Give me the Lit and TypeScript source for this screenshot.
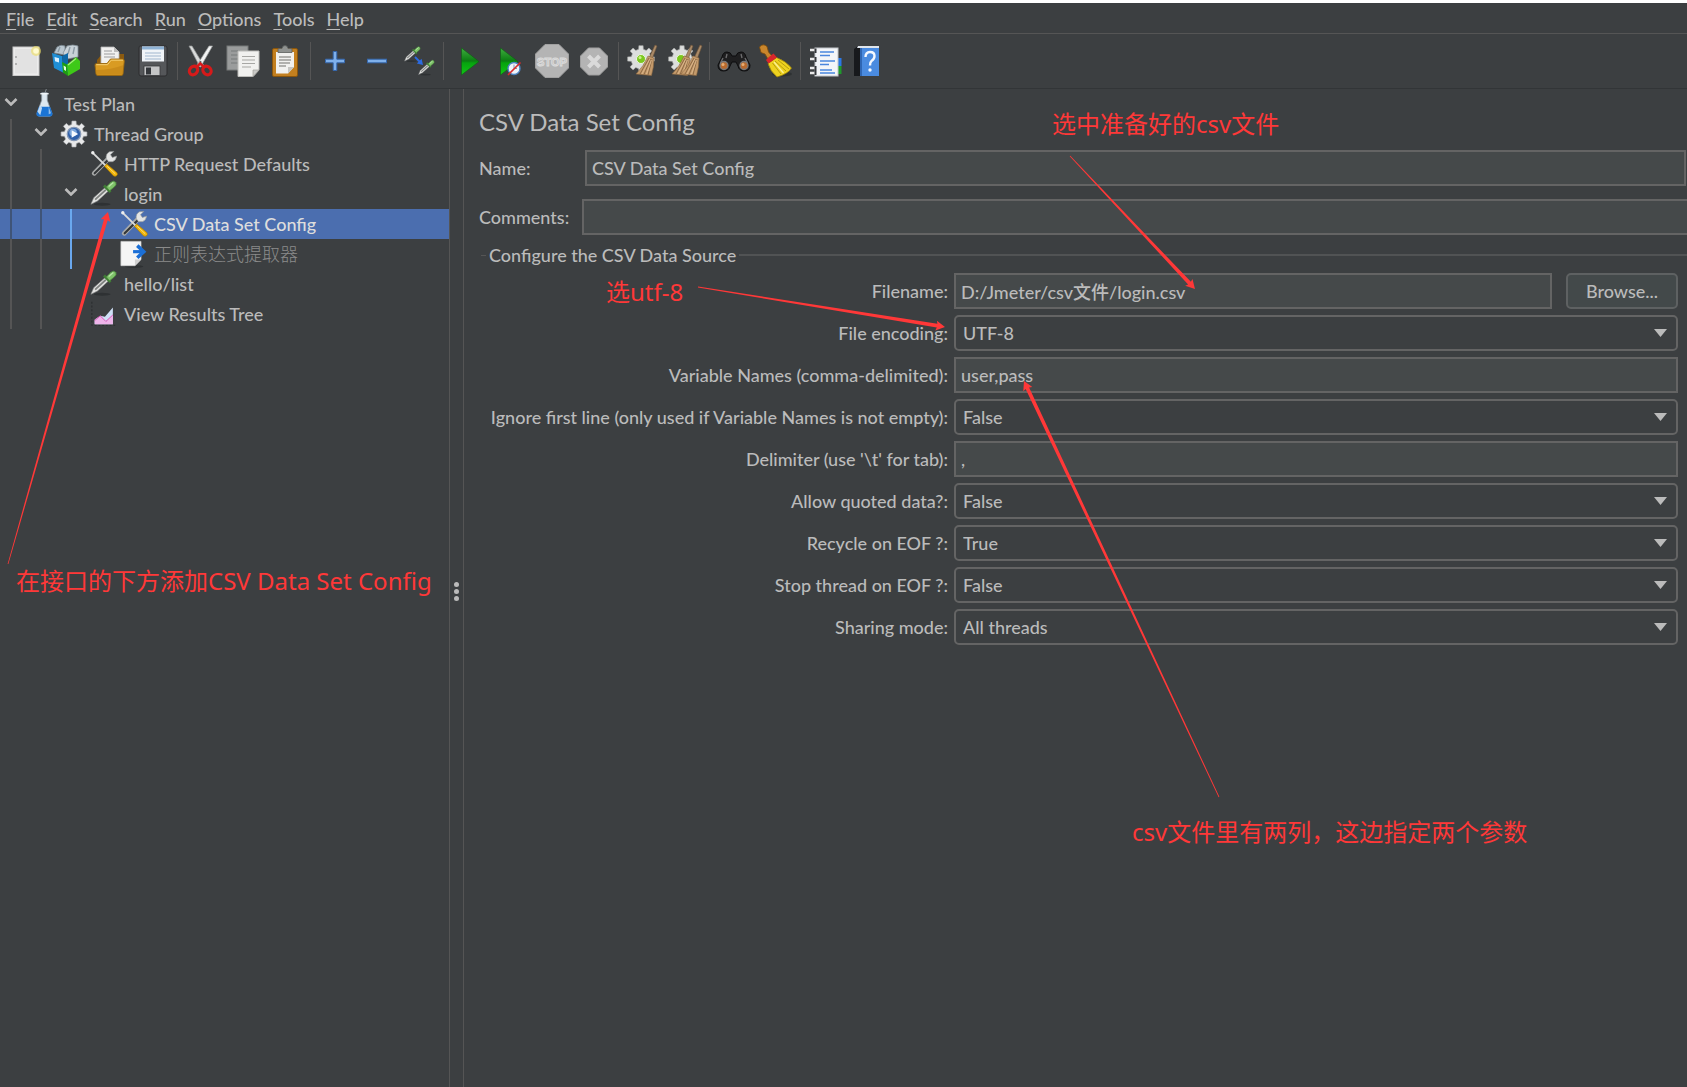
import { LitElement, html, svg, css, nothing, TemplateResult } from "lit";
import { customElement, property, state } from "lit/decorators.js";
import { classMap } from "lit/directives/class-map.js";

const gearPath = (cx: number, cy: number, ro: number, ri: number, n = 8) => {
  const pts: string[] = [];
  const step = (Math.PI * 2) / n;
  for (let i = 0; i < n; i++) {
    const a = i * step;
    for (const [d, r] of [[-0.3, ri], [-0.2, ro], [0.2, ro], [0.3, ri]]) {
      pts.push(`${(cx + Math.cos(a + d * step) * r).toFixed(2)} ${(cy + Math.sin(a + d * step) * r).toFixed(2)}`);
    }
  }
  return `M${pts.join("L")}Z`;
};

const dropper = (x: number, y: number, s: number) => svg`
  <g transform="translate(${x} ${y}) scale(${s})">
    <ellipse cx="13" cy="26" rx="9" ry="1.6" fill="#25282a" opacity=".6"/>
    <path d="M1 26 L4 19 L17 7.5 L20.5 11 L8 22.5Z" fill="#e4e4e2" stroke="#8d8f8f" stroke-width=".7"/>
    <path d="M5.5 21 L17 10.5" stroke="#7f8280" stroke-width="2"/>
    <path d="M15 6 L22 13" stroke="#3f7d35" stroke-width="3"/>
    <path d="M17.5 7.5 L22.5 2.5 Q25.5 0 27.5 2.5 Q29 5 26 7.5 L21 11.5Z" fill="#7fc36a" stroke="#4c8f3e" stroke-width=".9"/>
    <path d="M20 7 L25 2.8" stroke="#b9e6aa" stroke-width="1.4"/>
  </g>`;

const bristles = (dx: number) => svg`
  <g transform="translate(${dx} 0)">
    <path d="M28 0 L30 1 L25.5 13 L22.5 12Z" fill="#a98a68" stroke="#6d5338" stroke-width=".6"/>
    <path d="M21 11 L27 13 Q27 22 24.500 30.500 L9 29 Q17 21 21 11Z" fill="#c49a6b" stroke="#8a6640" stroke-width=".6"/>
    <path d="M22 13 L13 29 M23.500 14 L17 29.500 M25 14 L21 30" stroke="#8d6a45" stroke-width="1"/>
    <path d="M22.800 14 L15 29 M24.500 15 L19.500 29" stroke="#e0bd92" stroke-width=".8"/>
  </g>`;

const icons: Record<string, TemplateResult> = {
  new: svg`
    <rect x="2" y="2" width="26" height="28.500" fill="#ececec" stroke="#c9c9c9"/>
    <rect x="4" y="4" width="22" height="24.500" fill="#e2e2e2"/>
    <circle cx="5" cy="12" r=".9" fill="#999"/><circle cx="5" cy="19" r=".9" fill="#999"/>
    <circle cx="25" cy="6" r="5" fill="#efe06a" opacity=".65"/><circle cx="25" cy="6" r="2.800" fill="#fffbd0"/>`,
  templates: svg`
    <path d="M1 8 L4 2 Q8 -1 12 1 L12 10Z" fill="#b9c6cf" stroke="#75838c" stroke-width=".8"/>
    <path d="M10 8 L14 1 Q20 -1 25 1 L25 12 L14 14Z" fill="#c9d2d8" stroke="#7d8b94" stroke-width=".8"/>
    <path d="M15 9 L17 2 M20 9 L21.500 2 M5 7 L7 2" stroke="#8c9ba5" stroke-width="1.400"/>
    <path d="M-1 8 L9 11 L11 28 L1 23Z" fill="#1f8fd6"/>
    <path d="M9 11 L15 8 L15 27 L11 28Z" fill="#0d68a8"/>
    <path d="M1.500 12 L6 13.200 V17.500 L2 16.200Z" fill="#d8f0ff"/>
    <path d="M9 17 L14 19.500 L15 31 L10 27.500Z" fill="#1d9e10"/>
    <path d="M14 19.500 L23 12 L27 16 V24 L15 31Z" fill="#3ec918"/>
    <path d="M15 20 L23 13.500" stroke="#a5f07d" stroke-width="1.200"/>
    <path d="M10.500 20.500 L13 22 V26 L11 24.800Z" fill="#e2ffd9"/>`,
  open: svg`
    <path d="M2 15 L7 9 H29 V18 H2Z" fill="#8a5a10"/>
    <path d="M6 2 H19 L24 7 V19 H6Z" fill="#f1f1f0" stroke="#b5b5b5" stroke-width=".8"/>
    <path d="M19 2 V7 H24Z" fill="#bdbdbd"/>
    <path d="M9 6 H17 M9 9 H20 M9 12 H20" stroke="#9c9c9c" stroke-width="1.200"/>
    <path d="M0 20 Q0 18.500 1.500 18.500 H12 L15.500 14 H27 Q29.500 14 29.300 16 L28 29 Q27.800 30.500 26 30.500 H3 Q1.200 30.500 1 29Z" fill="#d99b22" stroke="#9a6810" stroke-width=".9"/>
    <path d="M1.300 19.700 H12.600 L16.200 15.200 H28" stroke="#f4cf74" fill="none"/>
    <path d="M1 25 Q16 25 28.500 20 L27.500 29.800 H1.800Z" fill="#b87a12" opacity=".45"/>`,
  save: svg`
    <path d="M3 1 H28.500 Q30 1 30 3 V29 Q30 31 28 31 H4 Q2 31 2 29 V3 Q2 1 3 1Z" fill="#55575a" stroke="#2c2d2f"/>
    <rect x="5" y="1.500" width="22" height="15" fill="#f0f4f8"/><rect x="5" y="1.500" width="22" height="3" fill="#8fb3d6"/>
    <path d="M8 8 H24 M8 11 H24 M8 14 H24" stroke="#9fb6cd" stroke-width="1.100"/>
    <rect x="7" y="21" width="16" height="9.500" fill="#c4c5c6" stroke="#37393b" stroke-width=".8"/>
    <rect x="9" y="22.500" width="5" height="7" fill="#33363a"/>`,
  cut: svg`
    <path d="M3 1 L6 1 L17.500 20 L14 22Z" fill="#d9dbdb" stroke="#8f9292" stroke-width=".7"/>
    <path d="M26.500 1 L23 1 L11 20 L14.500 22Z" fill="#f2f3f3" stroke="#9b9e9e" stroke-width=".7"/>
    <circle cx="14.500" cy="17" r="1.100" fill="#555"/>
    <ellipse cx="7.500" cy="25.500" rx="3.800" ry="4.600" fill="none" stroke="#d61a1a" stroke-width="3.200" transform="rotate(40 7.500 25.500)"/>
    <ellipse cx="21" cy="25.500" rx="3.800" ry="4.600" fill="none" stroke="#d61a1a" stroke-width="3.200" transform="rotate(-40 21 25.500)"/>
    <path d="M10.500 22 L14.200 18.500 L18 22" fill="none" stroke="#d61a1a" stroke-width="2.600"/>`,
  copy: svg`
    <rect x="-1" y="1" width="21" height="24" fill="#9a9c9c" stroke="#777a7a"/>
    <path d="M3 6 H12 M3 10 H10 M3 14 H10 M3 18 H10" stroke="#777a7a" stroke-width="1.200"/>
    <path d="M10 6 H31 V25 L25 31.500 H10Z" fill="#f1f1ef" stroke="#bcbcb9"/>
    <path d="M31 25 H25 V31.500Z" fill="#c9c9c6" stroke="#9d9d9a" stroke-width=".7"/>
    <path d="M14 11.500 H27 M14 15 H27 M14 18.500 H27 M14 22 H23" stroke="#a7a7a4" stroke-width="1.200"/>`,
  paste: svg`
    <rect x="2.500" y="3.500" width="25" height="28" rx="1.500" fill="#c27f1f" stroke="#8a560d"/>
    <path d="M6 7 H24 V22 L18 28.500 H6Z" fill="#f1f1ef"/>
    <path d="M24 22 H18 V28.500Z" fill="#c5c5c2"/>
    <path d="M9 12 H21 M9 15 H21 M9 18 H20 M9 21 H16" stroke="#9c9c99" stroke-width="1.300"/>
    <path d="M8 7.500 V4.500 Q8 3.500 10 3.500 H12 Q12.500 .5 15 .5 Q17.500 .5 18 3.500 H20 Q22 3.500 22 4.500 V7.500Z" fill="#8f9290" stroke="#5b5e5c" stroke-width=".8"/>`,
  plus: svg`<path d="M14.200 6.500 H17.800 V14.200 H25.500 V17.800 H17.800 V25.500 H14.200 V17.800 H6.500 V14.200 H14.200Z" fill="#7fb0ea" stroke="#3567ad"/>`,
  minus: svg`<rect x="6.500" y="14.200" width="19" height="3.600" fill="#7fb0ea" stroke="#3567ad"/>`,
  toggle: svg`
    ${dropper(1, 1, 0.58)}${dropper(15, 14.5, 0.58)}
    <path d="M12 12 L17 17" stroke="#2c6be0" stroke-width="1.800"/><path d="M20 20 L13.800 18.600 L18.600 13.800Z" fill="#2c6be0"/>`,
  play: svg`
    <defs><linearGradient id="gp" x1="0" y1="0" x2="0" y2="1"><stop offset="0" stop-color="#3fae3f"/><stop offset=".48" stop-color="#0b7d12"/><stop offset=".55" stop-color="#06a30e"/><stop offset="1" stop-color="#12c416"/></linearGradient></defs>
    <path d="M9.500 3 L27 16.500 L9.500 30Z" fill="url(#gp)" stroke="#0e5e12" stroke-width=".6"/>`,
  playNow: svg`
    <defs><linearGradient id="gq" x1="0" y1="0" x2="0" y2="1"><stop offset="0" stop-color="#3fae3f"/><stop offset=".48" stop-color="#0b7d12"/><stop offset=".55" stop-color="#06a30e"/><stop offset="1" stop-color="#12c416"/></linearGradient></defs>
    <path d="M6.500 3 L24 16.500 L6.500 30Z" fill="url(#gq)" stroke="#0e5e12" stroke-width=".6"/>
    <circle cx="20" cy="23.500" r="6" fill="#eef3fa" stroke="#4d83c2" stroke-width="1.400"/>
    <path d="M20 19.500 V23.500 H23" stroke="#7b98ba" fill="none"/>
    <path d="M14 30 L26.500 17.500" stroke="#d92b2b" stroke-width="1.600"/>`,
  stop: svg`
    <path d="M9 -.5 H23 L32.500 9 V23 L23 32.500 H9 L-.5 23 V9Z" fill="#b4b4b4" stroke="#a0a0a0"/>
    <text x="16" y="20.500" text-anchor="middle" class="stop-word">STOP</text>`,
  shutdown: svg`
    <path d="M10.500 3 H21.500 L29.500 11 V22 L21.500 30 H10.500 L2.500 22 V11Z" fill="#b4b4b4" stroke="#a0a0a0"/>
    <path d="M10.500 11 L21.500 22 M21.500 11 L10.500 22" stroke="#dadada" stroke-width="4"/>`,
  clear: svg`
    <path d="${gearPath(14, 14, 13.5, 10)}" fill="#dcdedd" stroke="#a9abaa" stroke-width=".6"/>
    <circle cx="14" cy="14" r="4.500" fill="#7cc81e" stroke="#eef5e4"/><circle cx="13" cy="12.500" r="1.500" fill="#c9f08d"/>
    ${bristles(0)}`,
  clearAll: svg`
    <path d="${gearPath(13, 14, 13.5, 10)}" fill="#dcdedd" stroke="#a9abaa" stroke-width=".6"/>
    <circle cx="12" cy="14" r="4.500" fill="#7cc81e" stroke="#eef5e4"/>
    ${bristles(-6)}${bristles(3)}`,
  find: svg`
    <path d="M4 12 Q5 7 9 7 Q13 7 14 11 H18 Q19 7 23 7 Q27 7 28 12 L32 20 Q32 26 26.500 26 Q21 26 20 21 L18 17 H14 L12 21 Q11 26 5.500 26 Q0 26 0 20Z" fill="#1f1f20" stroke="#0d0d0e"/>
    <path d="M5 13 L2.500 18 M27 13 L29.500 18 M9 9 L8 13 M23 9 L24 13" stroke="#6c6c6e" stroke-width="1.400"/>
    <circle cx="6" cy="20.500" r="4" fill="#b86a2e" stroke="#77797b" stroke-width="1.300"/><circle cx="26" cy="20.500" r="4" fill="#b86a2e" stroke="#77797b" stroke-width="1.300"/>
    <circle cx="5" cy="19.500" r="1.500" fill="#e6ab72"/><circle cx="25" cy="19.500" r="1.500" fill="#e6ab72"/>`,
  resetFind: svg`
    <ellipse cx="22" cy="29" rx="10" ry="2.500" fill="#25282a" opacity=".6"/>
    <path d="M-.5 2 Q3 -2 7 1.500 L8.500 7 L12 11 L8 14 L5 9 L1 7.500Z" fill="#c9862c" stroke="#7c4d0d" stroke-width=".8"/>
    <path d="M16.500 12.500 Q26 16 31.500 23 Q28 29 17 32 Q10 26 8 18.500Z" fill="#eed21f" stroke="#9b8209" stroke-width=".8"/>
    <path d="M15 16 L26 26 M12.500 18 L21 29 M18 15 L29 24" stroke="#b89c0c" stroke-width="1"/>
    <path d="M14 17 L23.500 28" stroke="#fbf09a" stroke-width="1.200"/>
    <path d="M13.500 8.500 L17 12.500 L8.500 18.500 L6 15 Q9 11.500 13.500 8.500Z" fill="#d8262b"/>`,
  functions: svg`
    <rect x="25" y="13" width="7.500" height="8" fill="#2a78e4"/><rect x="25" y="21" width="7.500" height="8" fill="#1f9a2c"/>
    <rect x="6" y="3" width="23" height="28" fill="#f3f5f8" stroke="#c2c5c9"/>
    <path d="M11 7 H25 M11 10.500 H21 M11 16 H26 M11 19.500 H20 M11 25 H23 M11 28 H26" stroke="#4a86dd" stroke-width="1.700"/>
    <path d="M1 5 H7 M1 14 H7 M1 23 H7 M1 28 H7" stroke="#e9e9e9" stroke-width="2.600"/>
    <path d="M6.500 3.500 V8 M6.500 12 V17 M6.500 21 V30" stroke="#34373a" stroke-width="2"/>`,
  help: svg`
    <path d="M3 4 L7 1 H28 V29 L25 31 H3Z" fill="#17191c"/>
    <path d="M7 1 H28 V3 H6Z" fill="#dfe5ec"/>
    <rect x="9" y="3" width="19" height="28" fill="#4a8be0"/><rect x="9" y="3" width="2" height="28" fill="#2f66b3"/>
    <path d="M14.500 12 Q14.500 7 19 7 Q23.500 7 23.500 11 Q23.500 14 20.500 16 Q19 17.200 19 20.500" fill="none" stroke="#f4f8ff" stroke-width="2.400"/>
    <circle cx="19" cy="25" r="1.700" fill="#f4f8ff"/>`,
  flask: svg`
    <path d="M16 3 L17.500 -1" stroke="#8b9298" stroke-width="1"/>
    <path d="M12.500 3 H18.500 V11 L23.500 25 Q24 28 21 28 H10 Q7 28 7.500 25 L12.500 11Z" fill="#dde8f0" stroke="#8b9aa5" stroke-width=".8"/>
    <path d="M9.500 18 H21.500 L24 25 Q24.500 28.500 21 28.500 H10 Q6.500 28.500 7 25Z" fill="#1b74d4"/>
    <path d="M8 23 L10.500 17 L13 19 L11 27Z" fill="#e6f1fa" opacity=".8"/><path d="M20 18 L22.500 25 L20 26Z" fill="#e6f1fa" opacity=".6"/>
    <path d="M11 4 H20" stroke="#f4f8fa" stroke-width="1.400"/>`,
  gear: svg`
    <path d="${gearPath(15, 15, 14, 10.5)}" fill="#e8e9ea" stroke="#b4b6b8" stroke-width=".7"/>
    <circle cx="15" cy="15" r="7.200" fill="#2f5fa8" stroke="#8397b5" stroke-width="1.400"/>
    <circle cx="14" cy="13.500" r="4" fill="#7ba5da"/><path d="M12.500 11 L19.500 15 L12.500 19Z" fill="#f7faff"/>`,
  tools: svg`
    <path d="M4.500 25 L20 9" stroke="#a9abab" stroke-width="5" stroke-linecap="round"/>
    <path d="M5 25 L19 11" stroke="#333638" stroke-width="2.200" stroke-linecap="round"/>
    <path d="M17.500 9.500 Q16.500 4 21 1.800 L25.500 1.500 L22 5 L24 8 L28.500 6.500 Q28 11.500 24 12.500 L20 12.500Z" fill="#e3e4e4" stroke="#949696" stroke-width=".7"/>
    <path d="M3 3 L17 17" stroke="#d9dada" stroke-width="2"/>
    <circle cx="3" cy="3" r="1.800" fill="#eee"/>
    <path d="M15.500 17.500 L18 15 L29 24.500 Q30 26.500 28.500 27.500 Q27 28.800 25 27.500Z" fill="#f2b60c" stroke="#a87a02" stroke-width=".7"/>
    <path d="M18.500 17.500 L27 25.500" stroke="#ffe07a" stroke-width="1"/>`,
  dropper: dropper(0, 0, 1),
  extract: svg`
    <ellipse cx="15" cy="28.500" rx="10" ry="1.500" fill="#25282a" opacity=".6"/>
    <path d="M1 1.500 H22.500 V21 L16 27.500 H1Z" fill="#f5f5f5" stroke="#cfcfcf" stroke-width=".8"/>
    <path d="M22.500 21 H16 V27.500Z" fill="#d0d0d0"/>
    <path d="M14 12.500 H25" stroke="#1b6fd6" stroke-width="3.400"/><path d="M18.500 6 L25.500 12.500 L18.500 19" fill="none" stroke="#1b6fd6" stroke-width="3.800"/>`,
  chart: svg`
    <path d="M2 2 V27 H27" stroke="#2a2d2f" stroke-width="1.200" stroke-dasharray="2 2" fill="none"/>
    <path d="M5 26 V21 L11 17 L16 18 L24.500 8 V26Z" fill="#cfe0f7"/>
    <path d="M5 26 V22 L11 17 L17 23 L24.500 16 V26Z" fill="#eeb4ea"/>
    <path d="M5 22 L11 17 L17 23 L24.500 16" stroke="#d94fb4" stroke-width="1" fill="none"/>`,
};

@customElement("jm-icon")
class JmIcon extends LitElement {
  @property() name = "";
  @property({ type: Number }) box = 32;
  static styles = css`
    :host { display: block; width: 32px; height: 32px; flex: none; }
    :host([small]) { width: 28px; height: 28px; }
    svg { display: block; width: 100%; height: 100%; overflow: visible; }
    .stop-word { font: 700 11px "Liberation Sans", sans-serif; fill: #b4b4b4; stroke: #dcdcdc; stroke-width: 1px; }
  `;
  render() {
    return html`<svg viewBox="0 0 ${this.box} ${this.box}" aria-hidden="true">${icons[this.name]}</svg>`;
  }
}

const menus = ["File", "Edit", "Search", "Run", "Options", "Tools", "Help"];

const toolGroups: [string, string][][] = [
  [["new", "New"], ["templates", "Templates"], ["open", "Open"], ["save", "Save"]],
  [["cut", "Cut"], ["copy", "Copy"], ["paste", "Paste"]],
  [["plus", "Expand all"], ["minus", "Collapse all"], ["toggle", "Toggle"]],
  [["play", "Start"], ["playNow", "Start no pauses"], ["stop", "Stop"], ["shutdown", "Shutdown"]],
  [["clear", "Clear"], ["clearAll", "Clear all"]],
  [["find", "Search tree"], ["resetFind", "Reset search"]],
  [["functions", "Function helper"], ["help", "Help"]],
];

interface Node { label: string; icon: string; level: number; open?: boolean; disabled?: boolean; }
const nodes: Node[] = [
  { label: "Test Plan", icon: "flask", level: 0, open: true },
  { label: "Thread Group", icon: "gear", level: 1, open: true },
  { label: "HTTP Request Defaults", icon: "tools", level: 2 },
  { label: "login", icon: "dropper", level: 2, open: true },
  { label: "CSV Data Set Config", icon: "tools", level: 3 },
  { label: "正则表达式提取器", icon: "extract", level: 3, disabled: true },
  { label: "hello/list", icon: "dropper", level: 2 },
  { label: "View Results Tree", icon: "chart", level: 2 },
];

interface Field { id: string; label: string; value: string; options?: string[]; browse?: boolean; }
const fields: Field[] = [
  { id: "filename", label: "Filename:", value: "D:/Jmeter/csv文件/login.csv", browse: true },
  { id: "encoding", label: "File encoding:", value: "UTF-8", options: ["UTF-8"] },
  { id: "variables", label: "Variable Names (comma-delimited):", value: "user,pass" },
  { id: "ignore", label: "Ignore first line (only used if Variable Names is not empty):", value: "False", options: ["False", "True"] },
  { id: "delimiter", label: "Delimiter (use '\\t' for tab):", value: "," },
  { id: "quoted", label: "Allow quoted data?:", value: "False", options: ["False", "True"] },
  { id: "recycle", label: "Recycle on EOF ?:", value: "True", options: ["True", "False"] },
  { id: "stop", label: "Stop thread on EOF ?:", value: "False", options: ["False", "True"] },
  { id: "sharing", label: "Sharing mode:", value: "All threads", options: ["All threads"] },
];

/* A pen arrow that widens from its tail to its head. */
const arrow = (x1: number, y1: number, x2: number, y2: number) => {
  const len = Math.hypot(x2 - x1, y2 - y1);
  const angle = (Math.atan2(y2 - y1, x2 - x1) * 180) / Math.PI;
  return svg`<path transform="translate(${x1} ${y1}) rotate(${angle})"
    d="M0 -.4 L${len - 8} -1.900 L${len - 9} -5 L${len} 0 L${len - 9} 5 L${len - 8} 1.900 L0 .4Z"/>`;
};

@customElement("app-root")
class AppRoot extends LitElement {
  @state() private selected = 4;

  static styles = css`
    :host {
      display: flex; flex-direction: column; position: relative;
      min-height: 100vh; box-sizing: border-box; overflow: hidden;
      border-top: 3px solid #fff; background: #3c3f41; color: #bbb;
      font: 500 18px/22px Lato, "Noto Sans CJK SC", sans-serif;
    }
    button, input, select { font: inherit; color: inherit; margin: 0; box-sizing: border-box; }
    .menubar { display: flex; gap: 12px; padding: 5px 6px 3px; height: 31px; box-sizing: border-box; border-bottom: 1px solid #555; }
    .menu { background: none; border: 0; padding: 0; }
    .key { text-decoration: underline; text-underline-offset: 3px; text-decoration-thickness: 1px; }
    .toolbar { display: flex; align-items: center; padding: 0 6px; height: 55px; box-sizing: border-box; border-bottom: 1px solid #323537; }
    .group { display: flex; }
    .group + .group { border-left: 1px solid #555; padding-left: 3px; margin-left: 3px; }
    .tool { width: 42px; height: 38px; padding: 0; border: 0; background: none; display: grid; place-items: center; }
    .body { display: flex; flex: 1; }
    .tree { width: 449px; flex: none; margin: 0; padding: 0; list-style: none; }
    .node { display: flex; align-items: center; height: 30px; white-space: nowrap; }
    .node.selected { background: #4b6eaf; color: #ddd; }
    .node.disabled { color: #8b8b8b; font-weight: 300; }
    .guide { width: 30px; height: 100%; flex: none; background: linear-gradient(#555, #555) 10px 0 / 2px 100% no-repeat; }
    .selected .guide { background-image: linear-gradient(#3f5477, #3f5477); }
    .node .guide.active { background-image: linear-gradient(#6aa8ee, #6aa8ee); }
    .twist { width: 22px; margin-right: 8px; display: flex; justify-content: center; }
    .twist svg { display: block; width: 14px; height: 8px; margin-bottom: 4px; }
    .caption { margin-left: 6px; }
    .splitter { width: 13px; flex: none; border: solid #555; border-width: 0 1px; display: flex; flex-direction: column; align-items: center; justify-content: center; gap: 2px; padding-top: 6px; }
    .dot { width: 5px; height: 5px; border-radius: 50%; background: #bbb; }
    .editor { flex: 1; min-width: 0; padding: 18px 0 0 15px; }
    .title { font-size: 24px; line-height: 30px; font-weight: 400; margin: 0 0 13px; }
    .line { display: flex; align-items: center; margin-bottom: 13px; }
    .line label { width: 103px; flex: none; }
    .line.name { padding-right: 1px; }
    .line.name label { width: 106px; }
    .box { height: 36px; flex: 1; min-width: 0; width: 100%; background: #45494a; border: 2px solid #646464; padding: 0 5px; border-radius: 0; outline: none; }
    .line.comments { margin-bottom: 9px; }
    .line.comments .box { border-right: 0; }
    fieldset { margin: 0; padding: 0; border: 0; min-width: 0; }
    legend { display: flex; align-items: center; width: 100%; padding: 0; gap: 3px; line-height: 22px; margin-bottom: 7px; }
    legend::before { content: ""; width: 5px; height: 1px; margin-left: 2px; background: #555; }
    legend::after { content: ""; flex: 1; height: 2px; background: #515354; }
    .grid { display: grid; grid-template-columns: 469px minmax(0, 1fr); column-gap: 6px; row-gap: 6px; align-items: center; padding-right: 9px; }
    .grid > label { text-align: right; white-space: nowrap; }
    .cell { display: flex; gap: 14px; position: relative; align-items: center; }
    .combo { appearance: none; width: 100%; height: 36px; background: #3c3f41; border: 2px solid #646464; border-radius: 5px; padding: 0 36px 0 7px; outline: none; }
    .caret { position: absolute; right: 11px; width: 13px; height: 8px; pointer-events: none; fill: #bbb; }
    .browse { width: 112px; height: 36px; flex: none; background: #43494a; border: 2px solid #5e6162; border-radius: 5px; padding: 0; }
    .marks { position: absolute; left: 0; top: -3px; width: 100%; height: 100%; pointer-events: none; fill: #ff3838; }
    .note { position: absolute; margin: 0; white-space: nowrap; pointer-events: none; color: #ff3838; font: 400 24px/32px "Noto Sans", "Noto Sans CJK SC", sans-serif; }
    .n1 { left: 1052px; top: 105px; }
    .n2 { left: 606px; top: 273px; }
    .n3 { left: 16px; top: 562px; }
    .n4 { left: 1132px; top: 813px; }
  `;

  private node(n: Node, i: number) {
    return html`<li role="treeitem" aria-level=${n.level + 1} aria-selected=${i === this.selected}
      class=${classMap({ node: true, selected: i === this.selected, disabled: !!n.disabled })}
      @click=${() => (this.selected = i)}>
      ${Array.from({ length: n.level }, (_, g) => html`<span class=${classMap({ guide: true, active: g === 2 })}></span>`)}
      <span class="twist">${n.open
        ? html`<svg viewBox="0 0 14 8"><path d="M1.500 1 L7 6.500 L12.500 1" fill="none" stroke="#bbb" stroke-width="2.600"/></svg>`
        : nothing}</span>
      <jm-icon small name=${n.icon} .box=${30}></jm-icon>
      <span class="caption">${n.label}</span>
    </li>`;
  }

  private field(f: Field) {
    return html`<label for=${f.id}>${f.label}</label>
      <div class="cell">
        ${f.options
          ? html`<select class="combo" id=${f.id}>${f.options.map((o) => html`<option ?selected=${o === f.value}>${o}</option>`)}</select>
              <svg class="caret" viewBox="0 0 13 8"><path d="M0 0 H13 L6.500 8Z"/></svg>`
          : html`<input class="box" id=${f.id} type="text" .value=${f.value}>`}
        ${f.browse ? html`<button class="browse" type="button">Browse...</button>` : nothing}
      </div>`;
  }

  render() {
    return html`
      <nav class="menubar">
        ${menus.map((m) => html`<button class="menu" type="button"><span class="key">${m[0]}</span>${m.slice(1)}</button>`)}
      </nav>
      <div class="toolbar" role="toolbar">
        ${toolGroups.map((g) => html`<div class="group">${g.map(([icon, label]) =>
          html`<button class="tool" type="button" aria-label=${label}><jm-icon name=${icon}></jm-icon></button>`)}</div>`)}
      </div>
      <div class="body">
        <ul class="tree" role="tree">${nodes.map((n, i) => this.node(n, i))}</ul>
        <div class="splitter"><span class="dot"></span><span class="dot"></span><span class="dot"></span></div>
        <main class="editor">
          <h1 class="title">CSV Data Set Config</h1>
          <div class="line name"><label for="name">Name:</label><input class="box" id="name" type="text" .value=${"CSV Data Set Config"}></div>
          <div class="line comments"><label for="comments">Comments:</label><input class="box" id="comments" type="text"></div>
          <fieldset>
            <legend>Configure the CSV Data Source</legend>
            <div class="grid">${fields.map((f) => this.field(f))}</div>
          </fieldset>
        </main>
      </div>
      <svg class="marks" aria-hidden="true">
        ${arrow(8, 564, 108, 212)}${arrow(698, 287, 945, 327)}${arrow(1070, 156, 1195, 289)}${arrow(1219, 797, 1024, 381)}
      </svg>
      <p class="note n1">选中准备好的csv文件</p>
      <p class="note n2">选utf-8</p>
      <p class="note n3">在接口的下方添加CSV Data Set Config</p>
      <p class="note n4">csv文件里有两列，这边指定两个参数</p>
    `;
  }
}
